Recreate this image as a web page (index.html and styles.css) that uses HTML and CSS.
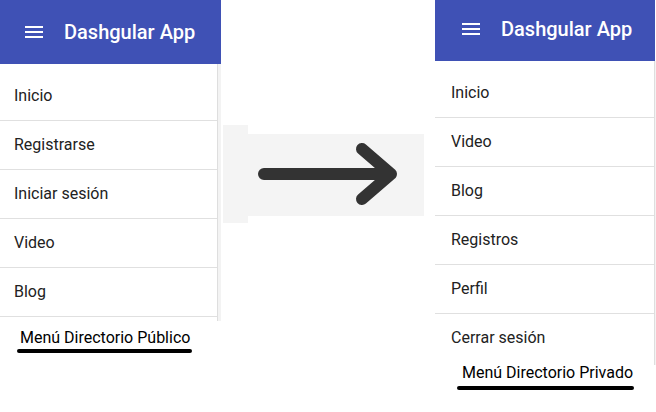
FILE: index.html
```html
<!DOCTYPE html>
<html lang="es">
<head>
<meta charset="utf-8">
<title>Dashgular App menús</title>
<link rel="stylesheet" href="styles.css">
</head>
<body>
<div class="stage">
  <section class="col col--left">
    <div class="panel panel--left">
      <header class="toolbar">
        <svg class="menu-icon" viewBox="0 0 24 24" width="24" height="24"><path fill="#fff" d="M3 18h18v-2H3v2zm0-5h18v-2H3v2zm0-7v2h18V6H3z"/></svg>
        <span class="title">Dashgular App</span>
      </header>
      <nav class="list list--left">
        <a class="item">Inicio</a>
        <a class="item">Registrarse</a>
        <a class="item">Iniciar sesión</a>
        <a class="item">Video</a>
        <a class="item">Blog</a>
      </nav>
    </div>
    <div class="caption caption--left">
      <div class="caption-text">Menú Directorio Público</div>
      <div class="caption-bar"></div>
    </div>
  </section>

  <section class="col col--mid">
    <div class="shade shade--a"></div>
    <div class="shade shade--b">
      <svg class="arrow" viewBox="0 0 176 82" width="176" height="82">
        <path d="M16 40H143M114 15L143 40L114 65" fill="none" stroke="#333" stroke-width="12" stroke-linecap="round" stroke-linejoin="round"/>
      </svg>
    </div>
  </section>

  <section class="col col--right">
    <div class="panel panel--right">
      <header class="toolbar toolbar--right">
        <svg class="menu-icon" viewBox="0 0 24 24" width="24" height="24"><path fill="#fff" d="M3 18h18v-2H3v2zm0-5h18v-2H3v2zm0-7v2h18V6H3z"/></svg>
        <span class="title">Dashgular App</span>
      </header>
      <nav class="list list--right">
        <a class="item">Inicio</a>
        <a class="item">Video</a>
        <a class="item">Blog</a>
        <a class="item">Registros</a>
        <a class="item">Perfil</a>
        <a class="item item--last">Cerrar sesión</a>
      </nav>
    </div>
    <div class="caption caption--right">
      <div class="caption-text">Menú Directorio Privado</div>
      <div class="caption-bar"></div>
    </div>
  </section>
</div>
</body>
</html>
```

FILE: styles.css
```css
html, body {
  margin: 0;
  padding: 0;
  background: #fff;
}
body {
  width: 656px;
  height: 412px;
  overflow: hidden;
  font-family: Roboto, "Liberation Sans", Arial, sans-serif;
}
.stage {
  display: flex;
  align-items: flex-start;
}
.col {
  display: flex;
  flex-direction: column;
  flex: none;
}
.col--left {
  width: 223px;
  margin-left: -2px;
}
.col--mid {
  width: 214px;
  flex-direction: row;
  align-items: flex-start;
  padding-top: 125px;
}
.col--right {
  width: 221px;
  margin-top: -3px;
}

/* Panels */
.panel {
  display: flex;
  flex-direction: column;
}
.toolbar {
  height: 64px;
  background: #3f51b5;
  display: flex;
  align-items: center;
  padding-left: 24px;
  box-sizing: border-box;
  width: 223px;
}
.toolbar--right {
  width: 220px;
}
.menu-icon {
  display: block;
  flex: none;
}
.title {
  margin-left: 18px;
  color: #fff;
  font-size: 20px;
  font-weight: 500;
  letter-spacing: 0;
  white-space: nowrap;
}
.list {
  display: flex;
  flex-direction: column;
  background: #fff;
  padding-top: 8px;
  box-sizing: border-box;
  width: 220px;
  border-right: 1px solid #dedede;
}
.list--left {
  padding-bottom: 4px;
  box-shadow: 3px 0 0 #f3f3f3;
}
.list--right {
  padding-bottom: 3px;
  box-shadow: 1px 0 0 #f3f3f3;
}
.item {
  display: flex;
  align-items: center;
  height: 48px;
  box-sizing: content-box;
  padding-left: 16px;
  font-size: 16px;
  line-height: 16px;
  color: #222;
  border-bottom: 1px solid #e0e0e0;
}
.item::after {
  content: "";
  height: 2px;
}
.item--last {
  border-bottom: none;
}

/* Captions */
.caption {
  display: flex;
  flex-direction: column;
  align-items: flex-start;
}
.caption-text {
  font-size: 16px;
  line-height: 16px;
  color: #000;
  white-space: nowrap;
}
.caption-bar {
  height: 4px;
  background: #000;
  border-radius: 2px;
}
.caption--left {
  padding-top: 9px;
}
.caption--left .caption-text {
  margin-left: 22px;
}
.caption--left .caption-bar {
  margin-top: 3px;
  margin-left: 19px;
  width: 175px;
}
.caption--right .caption-text {
  margin-left: 27px;
}
.caption--right .caption-bar {
  margin-top: 5px;
  margin-left: 22px;
  width: 177px;
}

/* Arrow area */
.shade {
  background: #f4f4f4;
  flex: none;
}
.shade--a {
  width: 25px;
  height: 98px;
  margin-left: 2px;
}
.shade--b {
  width: 176px;
  height: 82px;
  margin-top: 9px;
}
.arrow {
  display: block;
}
```
